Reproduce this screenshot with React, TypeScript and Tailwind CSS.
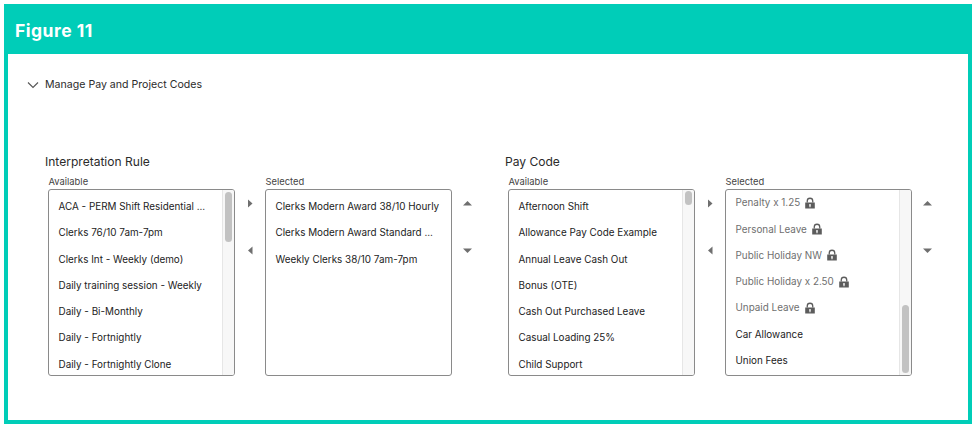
const FONT = "font-['Inter','Liberation_Sans',sans-serif]"

type Item = { label: string; locked?: boolean }

function plain(labels: string[]): Item[] {
  return labels.map((label) => ({ label }))
}

function Lock() {
  return (
    <svg width="12" height="12" viewBox="0 0 12 12" className="ml-[4px] shrink-0 text-[#5c5c5c]">
      <path d="M2.6 5.5V4a3.4 3.4 0 0 1 6.8 0v1.5H8.1V4a2.1 2.1 0 0 0-4.2 0v1.5z" fill="currentColor" />
      <path
        fillRule="evenodd"
        d="M1.2 5.4h9.6v6.2H1.2zM6 7a1 1 0 0 0-.55 1.8V10.2h1.1V8.8A1 1 0 0 0 6 7z"
        fill="currentColor"
      />
    </svg>
  )
}

function Arrow({ dir }: { dir: 'left' | 'right' | 'up' | 'down' }) {
  const points = {
    left: '6.5,0.5 6.5,8.5 2,4.5',
    right: '2,0.5 2,8.5 6.5,4.5',
    up: '0,6.5 9,6.5 4.5,2',
    down: '0,2.5 9,2.5 4.5,7',
  }
  return (
    <svg width="9" height="9" viewBox="0 0 9 9" className="block text-[#6f6f6f]">
      <polygon points={points[dir]} fill="currentColor" />
    </svg>
  )
}

function ListBox({
  label,
  items,
  scrollbar,
  listTop = 'pt-[3.2px]',
}: {
  label: string
  items: Item[]
  scrollbar?: { top: string; height: string }
  listTop?: string
}) {
  return (
    <div className="w-[187px] shrink-0">
      <p className="h-[15px] pl-[0.5px] text-[9.4px] leading-[15px] text-[#444]">{label}</p>
      <div className="flex h-[187px] overflow-hidden rounded-[3px] border border-[#8a8a8a] bg-white">
        <ul className={`min-w-0 flex-1 overflow-hidden pl-[9.5px] ${listTop}`}>
          {items.map((item) => (
            <li
              key={item.label}
              className={`flex h-[26.3px] items-center whitespace-nowrap text-[9.9px] ${
                item.locked ? 'text-[#6f6f6f]' : 'text-[#222]'
              }`}
            >
              {item.label}
              {item.locked && <Lock />}
            </li>
          ))}
        </ul>
        {scrollbar && (
          <div className="flex w-[12px] shrink-0 flex-col border-l border-[#e6e6e6] bg-[#f7f7f7] pl-[2px]">
            <div className={`w-[7px] rounded-[4px] bg-[#c2c2c2] ${scrollbar.top} ${scrollbar.height}`} />
          </div>
        )}
      </div>
    </div>
  )
}

function Arrows({ first, second, width }: { first: 'left' | 'right' | 'up'; second: 'left' | 'down'; width: string }) {
  return (
    <div className={`flex shrink-0 flex-col items-center gap-[38px] pt-[25px] ${width}`}>
      <Arrow dir={first} />
      <Arrow dir={second} />
    </div>
  )
}

function Group({
  title,
  available,
  selected,
  availableBar,
  selectedBar,
  selectedTop,
}: {
  title: string
  available: Item[]
  selected: Item[]
  availableBar: { top: string; height: string }
  selectedBar?: { top: string; height: string }
  selectedTop?: string
}) {
  return (
    <section className="w-[460px] shrink-0">
      <h2 className="-ml-[3px] h-[21px] text-[12.05px] leading-[17px] text-[#2b2b2b]">{title}</h2>
      <div className="flex">
        <ListBox label="Available" items={available} scrollbar={availableBar} />
        <Arrows first="right" second="left" width="w-[30px]" />
        <ListBox label="Selected" items={selected} scrollbar={selectedBar} listTop={selectedTop} />
        <Arrows first="up" second="down" width="w-[31px]" />
      </div>
    </section>
  )
}

export default function App() {
  return (
    <div className={`h-[428px] w-[976px] bg-white p-[4px] ${FONT}`}>
      <div className="flex h-[420px] w-[968px] flex-col border-x-4 border-b-4 border-[#00cdb8] bg-white">
        <header className="-mx-[4px] flex h-[50px] shrink-0 items-center bg-[#00cdb8] pl-[11px] pt-[5px]">
          <h1 className="text-[17.5px] font-bold tracking-[0.5px] text-white">Figure 11</h1>
        </header>
        <button className="ml-[19px] mt-[23px] flex h-[16px] items-center gap-[6px] self-start text-[10.6px] text-[#2b2b2b]">
          <svg width="12" height="12" viewBox="0 0 12 12" fill="none" stroke="#555" strokeWidth="1.1">
            <path d="M1 3.5 6 8.5l5-5" />
          </svg>
          Manage Pay and Project Codes
        </button>
        <div className="mt-[60px] flex pl-[40px]">
          <Group
            title="Interpretation Rule"
            available={plain([
              'ACA - PERM Shift Residential ...',
              'Clerks 76/10 7am-7pm',
              'Clerks Int - Weekly (demo)',
              'Daily training session - Weekly',
              'Daily - Bi-Monthly',
              'Daily - Fortnightly',
              'Daily - Fortnightly Clone',
            ])}
            selected={plain([
              'Clerks Modern Award 38/10 Hourly',
              'Clerks Modern Award Standard ...',
              'Weekly Clerks 38/10 7am-7pm',
            ])}
            availableBar={{ top: 'mt-[2px]', height: 'h-[50px]' }}
          />
          <Group
            title="Pay Code"
            available={plain([
              'Afternoon Shift',
              'Allowance Pay Code Example',
              'Annual Leave Cash Out',
              'Bonus (OTE)',
              'Cash Out Purchased Leave',
              'Casual Loading 25%',
              'Child Support',
            ])}
            selected={[
              { label: 'Penalty x 1.25', locked: true },
              { label: 'Personal Leave', locked: true },
              { label: 'Public Holiday NW', locked: true },
              { label: 'Public Holiday x 2.50', locked: true },
              { label: 'Unpaid Leave', locked: true },
              { label: 'Car Allowance' },
              { label: 'Union Fees' },
            ]}
            availableBar={{ top: 'mt-[1px]', height: 'h-[14px]' }}
            selectedBar={{ top: 'mt-[115px]', height: 'h-[68px]' }}
            selectedTop="-mt-[0.5px]"
          />
        </div>
      </div>
    </div>
  )
}
